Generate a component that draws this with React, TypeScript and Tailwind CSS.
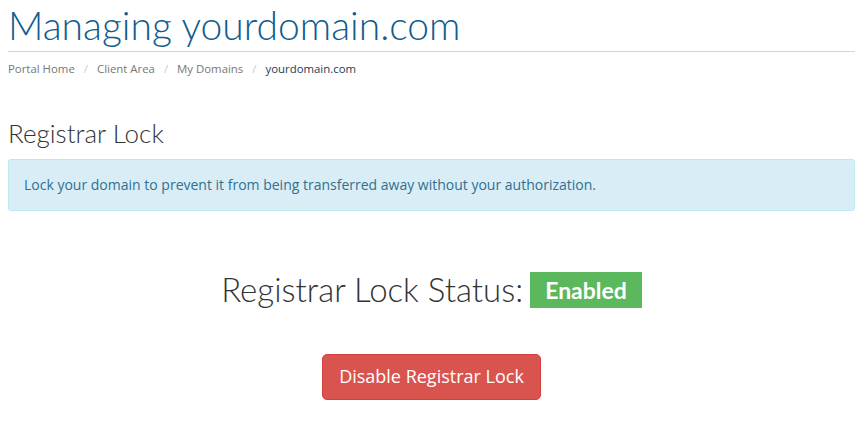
import React from 'react'

const crumbs = ['Portal Home', 'Client Area', 'My Domains']

export default function App() {
  return (
    <div className="min-h-[431px] w-[863px] bg-white px-2 font-['Open_Sans',sans-serif]">
      {/* Page header */}
      <h1 className="pt-[5px] font-['Lato',sans-serif] text-[39px] font-light leading-[40px] text-[#115c8e]">
        Managing yourdomain.com
      </h1>
      <div className="mt-[6px] border-t border-[#d4d4d4]" />
      <ol className="mt-[8px] flex items-center text-[11.4px] text-[#777]">
        {crumbs.map(c => (
          <li key={c} className="flex items-center">
            <span>{c}</span>
            <span className="px-[9px] text-[#ccc]">/</span>
          </li>
        ))}
        <li className="text-[#1d3b55]">yourdomain.com</li>
      </ol>

      {/* Section */}
      <h2 className="mt-[41px] font-['Lato',sans-serif] text-[26px] font-light leading-[30px] text-[#333]">
        Registrar Lock
      </h2>
      <div className="mt-[11px] rounded-[3px] border border-[#bce8f1] bg-[#d9edf7] px-[15px] py-[15px] text-[14px] leading-[20px] text-[#31708f]">
        Lock your domain to prevent it from being transferred away without your authorization.
      </div>

      <div className="mt-[54px] flex items-center justify-center gap-[7px]">
        <span className="font-['Lato',sans-serif] text-[33px] font-light text-[#333]">Registrar Lock Status:</span>
        <span className="flex h-[36px] items-center bg-[#5cb85c] px-[15px] font-['Lato',sans-serif] text-[23px] font-bold text-white">
          Enabled
        </span>
      </div>

      <div className="mt-[39px] flex justify-center">
        <button className="h-[46px] w-[219px] rounded-[5px] border border-[#d43f3a] bg-[#d9534f] text-[18px] text-white">
          Disable Registrar Lock
        </button>
      </div>
    </div>
  )
}
